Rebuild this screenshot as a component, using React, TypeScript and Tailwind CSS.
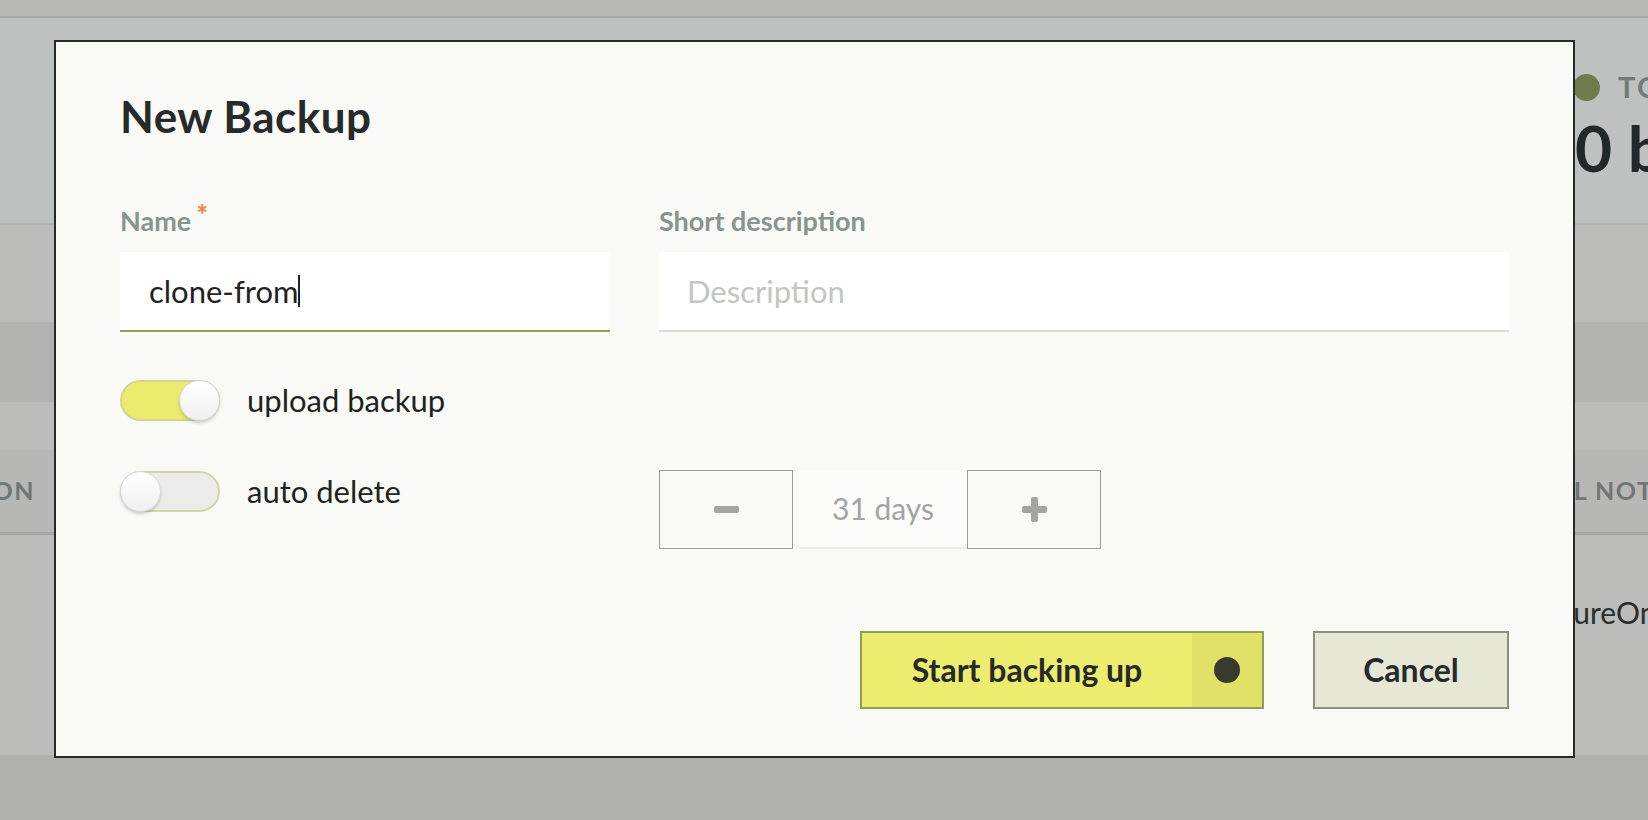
import React from 'react'

function Toggle({ on }: { on: boolean }) {
  return (
    <div
      className={`relative w-[100px] h-[41px] rounded-full border-2 ${
        on ? 'bg-[#ebeb6d] border-[#d3d394]' : 'bg-[#ebebe7] border-[#d4d4a8]'
      }`}
    >
      <div
        className={`absolute top-[-2px] w-[41px] h-[41px] rounded-full border border-[#d6d6d6] bg-gradient-to-b from-white to-[#f0f0f0] shadow-[0_2px_3px_rgba(0,0,0,0.18)] ${
          on ? 'right-[-2px]' : 'left-[-2px]'
        }`}
      />
    </div>
  )
}

function Stepper() {
  return (
    <div className="flex h-[79px]">
      <button className="w-[134px] h-full border-[1.5px] border-[#9c9c9c] flex items-center justify-center">
        <span className="block w-[25px] h-[7px] rounded-[2px] bg-[#a4a4a4]" />
      </button>
      <div className="ml-[6px] w-[168px] h-full bg-[#fcfcfb] border-b-2 border-[#ebebea] flex items-center justify-center text-[30px] text-[#a3a3a3]">
        31 days
      </div>
      <button className="w-[134px] h-full border-[1.5px] border-[#9c9c9c] flex items-center justify-center">
        <span className="relative block w-[25px] h-[25px]">
          <span className="absolute left-0 top-[9px] w-[25px] h-[7px] rounded-[2px] bg-[#a4a4a4]" />
          <span className="absolute top-0 left-[9px] w-[7px] h-[25px] rounded-[2px] bg-[#a4a4a4]" />
        </span>
      </button>
    </div>
  )
}

export default function App() {
  return (
    <div className="relative w-[1648px] h-[820px] overflow-hidden font-['Lato',sans-serif] bg-[#bcbcbb]">
      {/* page behind the dialog */}
      <div className="h-[16px] bg-[#b8b8b6]" />
      <div className="h-[2px] bg-[#a9a9a7]" />
      <div className="h-[205px] bg-[#bfc1c0] pl-[1573px] pt-[54px]">
        <div className="flex items-center h-[30px] gap-[18px] whitespace-nowrap">
          <span className="block w-[27px] h-[27px] rounded-full bg-[#707a4b] shrink-0" />
          <span className="text-[29px] font-bold tracking-[0.08em] text-[#727a78]">TOTAL SIZE</span>
        </div>
        <div className="mt-[14px] pl-[2px] text-[64px] leading-[64px] font-bold text-[#232828] whitespace-nowrap">
          0 bytes
        </div>
      </div>
      <div className="h-[2px] bg-[#b2b2b1]" />
      <div className="h-[97px] bg-[#bcbcbb]" />
      <div className="h-[80px] bg-[#b2b2b1]" />
      <div className="h-[48px] bg-[#bcbcbb]" />
      <div className="h-[82px] bg-[#b7b7b6] flex items-center text-[25px] font-bold tracking-[0.06em] text-[#6f7776] whitespace-nowrap">
        <div className="w-[35px] shrink-0 overflow-hidden">
          <div className="ml-[-140px] w-[175px] text-right">ACTION</div>
        </div>
        <div className="ml-[1470px]">EMAIL NOTIFICATIONS</div>
      </div>
      <div className="h-[3px] bg-[#a7a7a6]" />
      <div className="h-[220px] bg-[#bcbcbb] pt-[55px] pl-[1511px] text-[30px] text-[#2a2e2e] whitespace-nowrap">
        CaptureOnly
      </div>
      <div className="h-[65px] bg-[#b0b0af]" />

      {/* dialog */}
      <div className="absolute left-[54px] top-[40px] w-[1521px] h-[718px] border-2 border-[#262a2a] bg-[#f9faf5] px-[64px] pt-[49px] text-[#262a2a]">
        <h2 className="text-[44px] leading-[50px] font-bold tracking-[0.01em]">New Backup</h2>

        <div className="mt-[64px] flex gap-[49px]">
          <div className="w-[490px]">
            <label className="flex items-start h-[32px] text-[27px] leading-[32px] font-bold text-[#8b9391]">
              Name
              <span className="ml-[5px] mt-[-5px] text-[28px] leading-[28px] text-[#f3804f]">*</span>
            </label>
            <div className="mt-[15px] h-[80px] bg-white border-b-2 border-[#8f9f5a] pl-[29px] flex items-center text-[31px] text-[#1f2222]">
              clone-from
              <span className="inline-block w-[2px] h-[32px] bg-[#1f2222]" />
            </div>
          </div>
          <div className="flex-1">
            <label className="block h-[32px] text-[27px] leading-[32px] font-bold text-[#8b9391]">Short description</label>
            <div className="mt-[15px] h-[80px] bg-white border-b-2 border-[#dcdcda] pl-[28px] flex items-center text-[31px] text-[#c2c6c2]">
              Description
            </div>
          </div>
        </div>

        <div className="mt-[48px] flex items-center h-[41px]">
          <Toggle on />
          <span className="ml-[27px] text-[31px] text-[#1f2222]">upload backup</span>
        </div>

        <div className="mt-[49px] flex gap-[49px]">
          <div className="w-[490px] flex items-center h-[42px]">
            <Toggle on={false} />
            <span className="ml-[27px] text-[31px] text-[#1f2222]">auto delete</span>
          </div>
          <Stepper />
        </div>

        <div className="mt-[82px] flex justify-end gap-[49px]">
          <button className="w-[404px] h-[78px] border-2 border-[#8e9e5a] bg-[#ecec6e] flex">
            <span className="flex-1 flex items-center justify-center text-[32px] font-bold text-[#262a2a]">
              Start backing up
            </span>
            <span className="w-[70px] h-full bg-[#e1e167] flex items-center justify-center">
              <span className="block w-[26px] h-[26px] rounded-full bg-[#383a2f]" />
            </span>
          </button>
          <button className="w-[196px] h-[78px] border-2 border-[#8f8f7f] bg-[#e7e7d5] text-[32px] font-bold text-[#262a2a]">
            Cancel
          </button>
        </div>
      </div>
    </div>
  )
}
